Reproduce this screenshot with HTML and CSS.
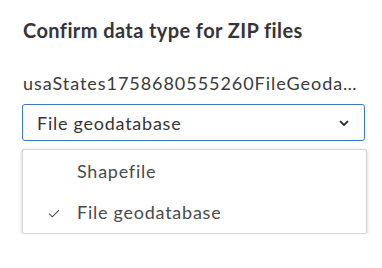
FILE: index.html
```html
<!DOCTYPE html>
<html>
<head>
<meta charset="utf-8">
<link rel="stylesheet" href="styles.css">
</head>
<body>
<div class="panel">
  <h2 class="title">Confirm data type for ZIP files</h2>
  <div class="filename">usaStates1758680555260FileGeoda…</div>
  <div class="select">
    <span class="select-value">File geodatabase</span>
    <svg class="chevron" width="12" height="8" viewBox="0 0 12 8"><path d="M2 2.2 L6 6 L10 2.2" fill="none" stroke="#2b2b2b" stroke-width="1.8"/></svg>
  </div>
  <ul class="menu">
    <li class="item"><span class="check"></span><span>Shapefile</span></li>
    <li class="item"><span class="check"><svg width="12" height="9" viewBox="0 0 12 9"><path d="M1 4.6 L4.3 7.8 L11 1.2" fill="none" stroke="#4a4a4a" stroke-width="1.1"/></svg></span><span>File geodatabase</span></li>
  </ul>
</div>
</body>
</html>
```
FILE: styles.css
```css
html, body { margin: 0; padding: 0; background: #fff; }
body { font-family: Lato, "Open Sans", sans-serif; color: #4a4a4a; }
.panel { padding: 18px 17px 0 22px; display: flex; flex-direction: column; }
.title { margin: 0 0 0 1px; font-size: 20px; font-weight: 700; color: #353535; line-height: 24px; letter-spacing: 0.4px; }
.filename { margin: 30px 0 0 1px; font-size: 18px; line-height: 22px; color: #3a3a3a; white-space: nowrap; letter-spacing: 0.95px; }
.select { margin-top: 10px; height: 35px; border: 1px solid #3a77c2; border-radius: 3px; display: flex; align-items: center; justify-content: space-between; padding: 0 14px 0 14px; }
.select-value { font-size: 18px; color: #353535; letter-spacing: 0.75px; }
.chevron { display: block; }
.menu { list-style: none; margin: 8px -2px 0 0; padding: 0; border: 1px solid #d4d4d4; border-radius: 2px; box-shadow: 0 1px 4px rgba(0,0,0,0.18); }
.item { height: 41.5px; display: flex; align-items: center; font-size: 18px; color: #4a4a4a; letter-spacing: 0.75px; }
.check { width: 54px; display: flex; justify-content: flex-start; box-sizing: border-box; padding-left: 25px; padding-top: 3px; }
```
